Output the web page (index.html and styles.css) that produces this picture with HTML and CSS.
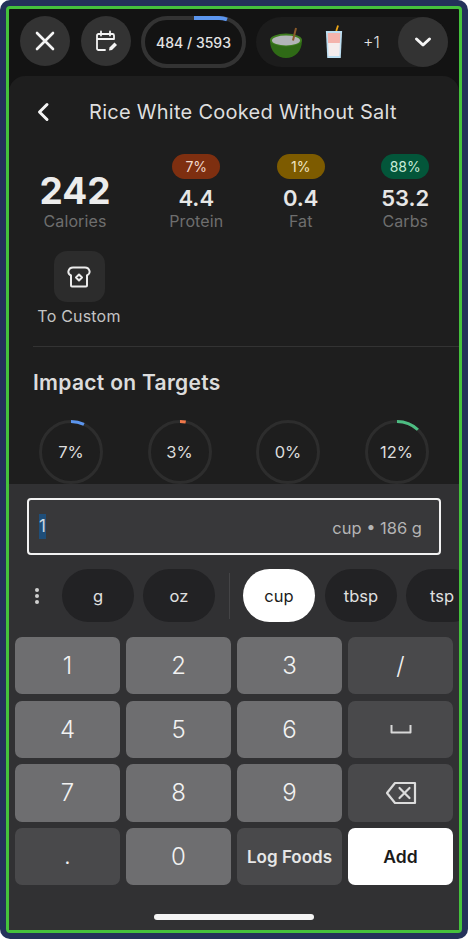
FILE: index.html
```html
<!DOCTYPE html>
<html lang="en">
<head>
<meta charset="utf-8">
<title>Rice White Cooked Without Salt</title>
<link rel="stylesheet" href="styles.css">
</head>
<body>
<div class="frame">
  <header class="topbar">
    <button class="circle"><svg width="28" height="28" viewBox="0 0 28 28"><path d="M6 6 L22 22 M22 6 L6 22" class="ico ico-x"/></svg></button>
    <button class="circle"><svg width="24" height="24" viewBox="0 0 24 24"><path d="M11 21H4.500A1.500 1.500 0 0 1 3 19.500V6.500A1.500 1.500 0 0 1 4.500 5H18.500A1.500 1.500 0 0 1 20 6.500V10M3 10H20M7 2.500V6.500M16 2.500V6.500" class="ico ico-thin"/><path d="M15 21.500L15.500 18.500L20.500 13.500L23 16L18 21Z" class="ico-fill"/></svg></button>
    <div class="budget">
      <svg class="budget-ring" width="105" height="52" viewBox="0 0 105 52"><rect x="2" y="2" width="101" height="48" rx="24" class="budget-track"/><path d="M53 2H78A24 24 0 0 1 86 3.500" class="budget-fill"/></svg>
      <span class="budget-text">484 / 3593</span>
    </div>
    <div class="foods">
      <svg class="bowl" width="34" height="32" viewBox="0 0 34 32"><path d="M1 13.500C1 24 8 31 17 31S33 24 33 13.500Z" class="bowl-body"/><ellipse cx="17" cy="13" rx="16" ry="6.500" class="bowl-rim"/><ellipse cx="17" cy="13.500" rx="14" ry="5" class="bowl-rice"/><path d="M27 1L24 13.500" class="straw"/></svg>
      <svg class="glass" width="18" height="34" viewBox="0 0 20 34" preserveAspectRatio="none"><path d="M12.500 6L14.500 0.500" class="glass-straw"/><path d="M1 6H19L17.500 33H2.500Z" class="glass-body"/><path d="M3 8H17L16.500 18H3.500Z" class="glass-pink"/><path d="M3.500 18H16.500L16 31H4Z" class="glass-milk"/></svg>
      <span class="more">+1</span>
      <button class="circle"><svg width="20" height="20" viewBox="0 0 20 20"><path d="M3.500 7L10 13L16.500 7" class="ico ico-chev"/></svg></button>
    </div>
  </header>

  <main class="sheet">
    <div class="title-row">
      <svg width="14" height="20" viewBox="0 0 14 20"><path d="M11 2.500L3.500 10L11 17.500" class="ico ico-chev"/></svg>
      <h1 class="title">Rice White Cooked Without Salt</h1>
    </div>

    <section class="stats">
      <div class="stat stat-cal">
        <div class="cal-num">242</div>
        <div class="stat-label">Calories</div>
      </div>
      <div class="stat">
        <span class="badge badge-red">7%</span>
        <div class="stat-num">4.4</div>
        <div class="stat-label">Protein</div>
      </div>
      <div class="stat">
        <span class="badge badge-yellow">1%</span>
        <div class="stat-num">0.4</div>
        <div class="stat-label">Fat</div>
      </div>
      <div class="stat">
        <span class="badge badge-green">88%</span>
        <div class="stat-num">53.2</div>
        <div class="stat-label">Carbs</div>
      </div>
    </section>

    <div class="custom">
      <div class="custom-tile"><svg width="24" height="22" viewBox="0 0 24 22"><path d="M5 20.500H19A1 1 0 0 0 20 19.500V9.500C22 8.500 23 7 22.500 5C22 3 20.500 1.500 18 1.500H6C3.500 1.500 2 3 1.500 5C1 7 2 8.500 4 9.500V19.500A1 1 0 0 0 5 20.500Z" class="ico ico-bread"/><path d="M12 8.500L15 11.500L12 14.500L9 11.500Z" class="ico ico-bread"/></svg></div>
      <div class="custom-label">To Custom</div>
    </div>

    <hr class="rule">

    <h2 class="impact">Impact on Targets</h2>

    <div class="rings">
      <div class="ring"><svg width="64" height="64" viewBox="0 0 64 64"><circle cx="32" cy="32" r="30.500" class="ring-track"/><circle cx="32" cy="32" r="30.500" pathLength="100" stroke-dasharray="7 93" class="ring-arc arc-blue"/></svg><span class="ring-text">7%</span></div>
      <div class="ring"><svg width="64" height="64" viewBox="0 0 64 64"><circle cx="32" cy="32" r="30.500" class="ring-track"/><circle cx="32" cy="32" r="30.500" pathLength="100" stroke-dasharray="3 97" class="ring-arc arc-orange"/></svg><span class="ring-text">3%</span></div>
      <div class="ring"><svg width="64" height="64" viewBox="0 0 64 64"><circle cx="32" cy="32" r="30.500" class="ring-track"/></svg><span class="ring-text">0%</span></div>
      <div class="ring"><svg width="64" height="64" viewBox="0 0 64 64"><circle cx="32" cy="32" r="30.500" class="ring-track"/><circle cx="32" cy="32" r="30.500" pathLength="100" stroke-dasharray="12 88" class="ring-arc arc-green"/></svg><span class="ring-text">12%</span></div>
    </div>
  </main>

  <section class="panel">
    <div class="field">
      <span class="field-value">1</span>
      <span class="field-unit">cup • 186 g</span>
    </div>
    <div class="units">
      <svg class="dots" width="6" height="18" viewBox="0 0 6 18"><circle cx="3" cy="3" r="2"/><circle cx="3" cy="9" r="2"/><circle cx="3" cy="15" r="2"/></svg>
      <span class="unit">g</span>
      <span class="unit">oz</span>
      <span class="unit-sep"></span>
      <span class="unit unit-on">cup</span>
      <span class="unit">tbsp</span>
      <span class="unit">tsp</span>
    </div>
    <div class="keys">
      <button class="key">1</button>
      <button class="key">2</button>
      <button class="key">3</button>
      <button class="key key-dark">/</button>
      <button class="key">4</button>
      <button class="key">5</button>
      <button class="key">6</button>
      <button class="key key-dark"><svg width="22" height="10" viewBox="0 0 22 10"><path d="M1.500 1V8.500H20.500V1" class="ico ico-space"/></svg></button>
      <button class="key">7</button>
      <button class="key">8</button>
      <button class="key">9</button>
      <button class="key key-dark"><svg width="32" height="24" viewBox="0 0 32 24"><path d="M10 2H30V22H10L2 12Z" class="ico ico-back"/><path d="M14.500 7L24.500 17M24.500 7L14.500 17" class="ico ico-back"/></svg></button>
      <button class="key key-dark key-dot">.</button>
      <button class="key">0</button>
      <button class="key key-dark key-text">Log Foods</button>
      <button class="key key-add">Add</button>
    </div>
    <div class="home"></div>
  </section>
</div>
</body>
</html>
```

FILE: styles.css
```css
* { box-sizing: border-box; }
html, body { margin: 0; height: 100%; }
html { background: #ffffff; }
body {
  background: #24325a;
  border-radius: 10px;
  padding: 6px;
  font-family: Inter, "Noto Sans", sans-serif;
  color: #e6e6e6;
  overflow: hidden;
}
button { font: inherit; color: inherit; border: 0; padding: 0; }
h1, h2 { margin: 0; }

.frame {
  width: 456px;
  height: 927px;
  border: 3px solid #45c23c;
  border-radius: 4px;
  background: #131313;
  display: flex;
  flex-direction: column;
  overflow: hidden;
}

.topbar {
  display: flex;
  align-items: flex-start;
  gap: 11px;
  padding: 7px 11px 0;
  height: 67px;
  flex: none;
}
.circle {
  width: 50px;
  height: 50px;
  border-radius: 50%;
  background: #333333;
  display: flex;
  align-items: center;
  justify-content: center;
  flex: none;
}
.ico { fill: none; stroke: #f4f4f4; stroke-linecap: round; stroke-linejoin: round; }
.ico-x { stroke-width: 2.600; }
.ico-thin { stroke-width: 1.800; }
.ico-fill { fill: #f4f4f4; }
.ico-chev { stroke-width: 3; }
.ico-bread { stroke-width: 2; stroke: #ececec; }
.ico-space { stroke-width: 2; stroke: #d8d8d8; stroke-linecap: butt; }
.ico-back { stroke-width: 2.200; stroke: #dcdcdc; }

.budget {
  position: relative;
  width: 105px;
  height: 52px;
  margin-left: -1px;
  display: flex;
  align-items: center;
  justify-content: center;
  flex: none;
}
.budget-ring { position: absolute; inset: 0; }
.budget-track { fill: none; stroke: #333333; stroke-width: 4; }
.budget-fill { fill: none; stroke: #5b95ee; stroke-width: 4; }
.budget-text { font-size: 14px; font-weight: 500; color: #e4e4e4; }

.foods {
  width: 192px;
  height: 50px;
  margin-left: -1px;
  margin-top: 1px;
  background: #1c1c1c;
  border-radius: 25px;
  display: flex;
  align-items: center;
  padding-left: 13px;
  flex: none;
}
.bowl { margin-top: 1px; }
.glass { margin-left: 22px; }
.more { font-size: 16px; font-weight: 300; color: #e4e4e4; margin-left: 20px; }
.foods .circle { margin-left: auto; }
.straw { stroke: #8a5a2a; stroke-width: 2; fill: none; }
.bowl-body { fill: #2f6a16; }
.bowl-rim { fill: #3f7d1f; }
.bowl-rice { fill: #b3b5b8; }
.glass-straw { stroke: #f0a817; stroke-width: 2; fill: none; }
.glass-body { fill: #bcdff2; }
.glass-pink { fill: #f4b3ac; }
.glass-milk { fill: #f5eded; }

.sheet {
  height: 408px;
  flex: none;
  background: #1e1e1e;
  border-radius: 16px 16px 0 0;
  overflow: hidden;
  padding: 22px 0 0 24px;
}
.title-row {
  display: flex;
  align-items: center;
  gap: 39px;
  height: 28px;
  margin-left: 3px;
}
.title { font-size: 20px; font-weight: 400; color: #dedede; white-space: nowrap; letter-spacing: 0.270px; }

.stats {
  display: grid;
  grid-template-columns: 111px repeat(3, 104.500px);
  margin-top: 28px;
}
.stat {
  display: flex;
  flex-direction: column;
  align-items: center;
  justify-content: flex-end;
}
.stat-cal { margin-right: 27px; }
.cal-num { font-size: 37px; font-weight: 700; color: #ececec; line-height: 42px; }
.badge {
  width: 48px;
  height: 25px;
  border-radius: 13px;
  display: flex;
  align-items: center;
  justify-content: center;
  font-size: 14px;
}
.badge-red { background: #7e2f10; color: #f0d8cc; }
.badge-yellow { background: #7d5b00; color: #f0e4c0; }
.badge-green { background: #03563a; color: #c8ebd8; }
.stat-num { font-size: 22px; font-weight: 600; color: #e6e6e6; line-height: 28px; margin-top: 5px; }
.stat-label { font-size: 16px; letter-spacing: 0.100px; color: #6e6e6e; line-height: 18px; }

.custom { width: 110px; display: flex; flex-direction: column; align-items: center; margin-top: 21px; margin-left: -9px; }
.custom-tile {
  width: 51px;
  height: 51px;
  background: #2c2c2c;
  border-radius: 13px;
  display: flex;
  align-items: center;
  justify-content: center;
}
.custom-label { font-size: 16px; letter-spacing: 0.200px; color: #c4c4c4; margin-top: 5px; line-height: 18px; }

.rule { border: 0; height: 1px; background: #333333; margin: 21px 0 0; }
.impact { font-size: 21px; letter-spacing: 0.300px; font-weight: 600; color: #dcdcdc; margin-top: 23px; line-height: 26px; }

.rings {
  display: grid;
  grid-template-columns: repeat(4, 64px);
  column-gap: 44.500px;
  margin-top: 24px;
  margin-left: 6px;
}
.ring { position: relative; width: 64px; height: 64px; display: flex; align-items: center; justify-content: center; }
.ring svg { position: absolute; inset: 0; transform: rotate(-90deg); }
.ring-track { fill: none; stroke: #2d2d2d; stroke-width: 3; }
.ring-arc { fill: none; stroke-width: 3; }
.arc-blue { stroke: #5b95ee; }
.arc-orange { stroke: #f0784a; }
.arc-green { stroke: #4dbd82; }
.ring-text { font-size: 16.500px; color: #dcdcdc; }

.panel {
  flex: 1;
  background: #313133;
  display: flex;
  flex-direction: column;
  position: relative;
}
.field {
  margin: 14px 18px 0;
  height: 57px;
  border: 2px solid #f2f2f2;
  border-radius: 4px;
  background: #38383a;
  display: flex;
  align-items: center;
  justify-content: space-between;
  padding: 0 17px 0 10px;
}
.field-value { font-size: 17px; color: #cfd8df; background: #1f4e79; line-height: 25px; }
.field-unit { font-size: 16.500px; color: #b4b4b4; padding-top: 2px; }

.units {
  display: flex;
  align-items: center;
  height: 53px;
  margin-top: 14px;
  overflow: hidden;
  padding-left: 25px;
  gap: 9px;
}
.dots { fill: #d0d0d0; margin-right: 13px; flex: none; }
.unit {
  flex: none;
  width: 72px;
  height: 53px;
  border-radius: 27px;
  background: #222224;
  display: flex;
  align-items: center;
  justify-content: center;
  font-size: 16.500px;
  color: #e0e0e0;
}
.unit-on { background: #ffffff; color: #1c1c1c; margin-left: 4px; margin-right: 1px; }
.unit-sep { flex: none; width: 1px; height: 46px; background: #444446; margin-left: 5px; }

.keys {
  display: grid;
  grid-template-columns: repeat(4, 105px);
  grid-auto-rows: 57.330px;
  gap: 6.330px 6px;
  margin: 15px 0 0 6px;
}
.key {
  background: #6e6e70;
  border-radius: 7px;
  display: flex;
  align-items: center;
  justify-content: center;
  font-size: 24px;
  font-weight: 300;
  color: #f2f2f2;
}
.key-dark { background: #49494b; }
.key-dot { align-items: flex-end; padding-bottom: 15px; }
.key-text { font-size: 17px; font-weight: 600; color: #e6e6e6; }
.key-add { background: #ffffff; color: #1a1a1a; font-size: 17.500px; font-weight: 600; }

.home {
  position: absolute;
  left: 145px;
  bottom: 10px;
  width: 160px;
  height: 6px;
  border-radius: 3px;
  background: #f4f4f4;
}
```
